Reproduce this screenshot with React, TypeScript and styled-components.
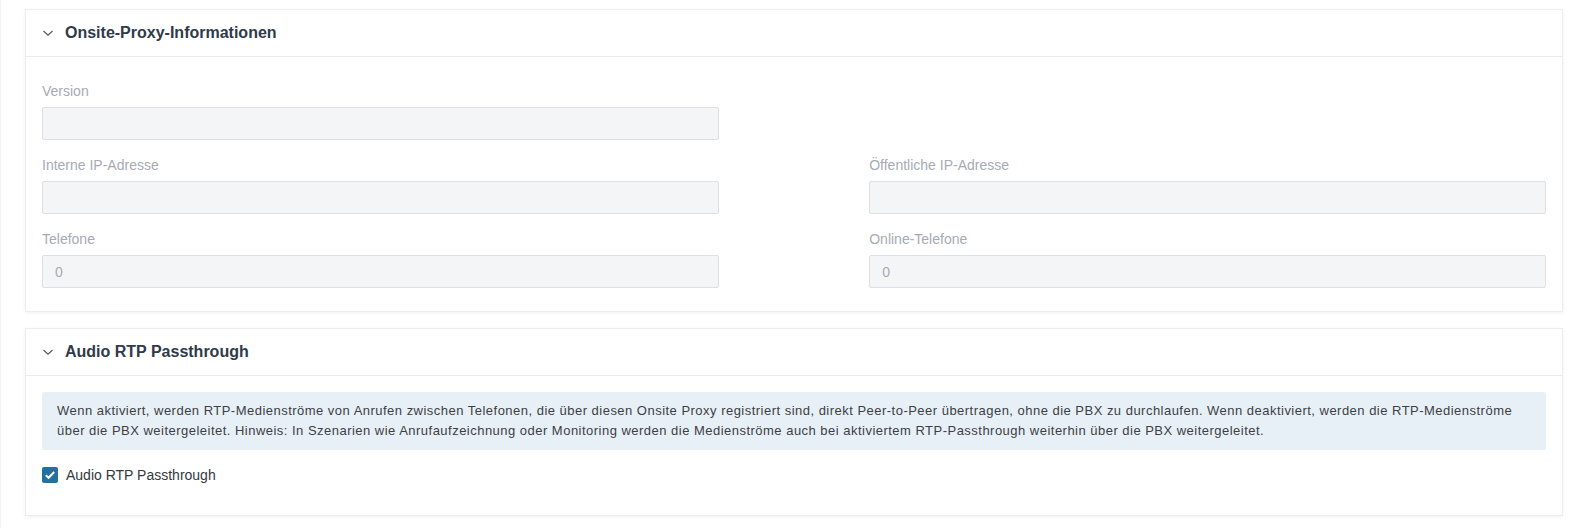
import React from 'react';
import styled, { createGlobalStyle } from 'styled-components';

const GlobalStyle = createGlobalStyle`
    html, body {
        margin: 0;
        padding: 0;
        background: #ffffff;
        font-family: "Liberation Sans", Arial, sans-serif;
    }
`;

const Page = styled.div`
    display: flex;
    flex-direction: column;
    gap: 16px;
    padding: 9px 11px 14px 24px;
    border-left: 1px solid #f2f2f2;
`;

const Card = styled.section`
    background: #fff;
    border: 1px solid #ededed;
    box-shadow: 0 1px 4px rgba(0, 0, 0, 0.06);
`;

const CardHeader = styled.div`
    display: flex;
    align-items: center;
    height: 46px;
    padding: 0 16px;
    gap: 11px;
    border-bottom: 1px solid #ececec;
`;

const Title = styled.h2`
    margin: 0;
    font-size: 16px;
    font-weight: 700;
    color: #2f3a4a;
`;

const CardBody = styled.div<{ $top: number; $bottom: number }>`
    padding: ${p => p.$top}px 16px ${p => p.$bottom}px 16px;
`;

const FieldGrid = styled.div`
    display: grid;
    grid-template-columns: 45% 45%;
    justify-content: space-between;
    row-gap: 15px;
`;

const Field = styled.div`
    display: flex;
    flex-direction: column;
    gap: 6px;
`;

const Label = styled.label`
    font-size: 14px;
    line-height: 20px;
    color: #a6abb3;
`;

const Input = styled.input`
    box-sizing: border-box;
    height: 33px;
    width: 100%;
    padding: 0 12px;
    background: #f4f5f7;
    border: 1px solid #dcdfe3;
    border-radius: 2px;
    font-family: inherit;
    font-size: 14px;
    color: #a6abb3;
    outline: none;
`;

const Info = styled.div`
    background: #e8f0f7;
    border-radius: 2px;
    padding: 9px 15px;
    font-size: 13px;
    line-height: 20px;
    letter-spacing: 0.48px;
    color: #3c3f44;
`;

const CheckRow = styled.label`
    display: flex;
    align-items: center;
    gap: 8px;
    margin-top: 16px;
    font-size: 14px;
    line-height: 18px;
    color: #333840;
`;

const Box = styled.span`
    display: flex;
    align-items: center;
    justify-content: center;
    width: 16px;
    height: 16px;
    border-radius: 2px;
    background: #22709f;
`;

const Chevron = () => (
    <svg width="12" height="8" viewBox="0 0 12 8">
        <path d="M1.5 2 L6 6.2 L10.5 2" fill="none" stroke="#4a5260" strokeWidth="1.1" />
    </svg>
);

const Check = () => (
    <svg width="12" height="10" viewBox="0 0 12 10">
        <path d="M1.8 5.2 L4.6 7.8 L10.2 2" fill="none" stroke="#fff" strokeWidth="2" />
    </svg>
);

const TextField = ({ label, value }: { label: string; value?: string }) => (
    <Field>
        <Label>{label}</Label>
        <Input readOnly disabled value={value ?? ''} />
    </Field>
);

export default function App() {
    return (
        <>
            <GlobalStyle />
            <Page>
                <Card>
                    <CardHeader>
                        <Chevron />
                        <Title>Onsite-Proxy-Informationen</Title>
                    </CardHeader>
                    <CardBody $top={24} $bottom={23}>
                        <FieldGrid>
                            <TextField label="Version" />
                            <div />
                            <TextField label="Interne IP-Adresse" />
                            <TextField label="Öffentliche IP-Adresse" />
                            <TextField label="Telefone" value="0" />
                            <TextField label="Online-Telefone" value="0" />
                        </FieldGrid>
                    </CardBody>
                </Card>
                <Card>
                    <CardHeader>
                        <Chevron />
                        <Title>Audio RTP Passthrough</Title>
                    </CardHeader>
                    <CardBody $top={16} $bottom={31}>
                        <Info>
                            Wenn aktiviert, werden RTP-Medienströme von Anrufen zwischen Telefonen, die über diesen Onsite Proxy registriert sind, direkt Peer-to-Peer übertragen, ohne die PBX zu durchlaufen. Wenn deaktiviert, werden die RTP-Medienströme über die PBX weitergeleitet. Hinweis: In Szenarien wie Anrufaufzeichnung oder Monitoring werden die Medienströme auch bei aktiviertem RTP-Passthrough weiterhin über die PBX weitergeleitet.
                        </Info>
                        <CheckRow>
                            <Box><Check /></Box>
                            Audio RTP Passthrough
                        </CheckRow>
                    </CardBody>
                </Card>
            </Page>
        </>
    );
}
